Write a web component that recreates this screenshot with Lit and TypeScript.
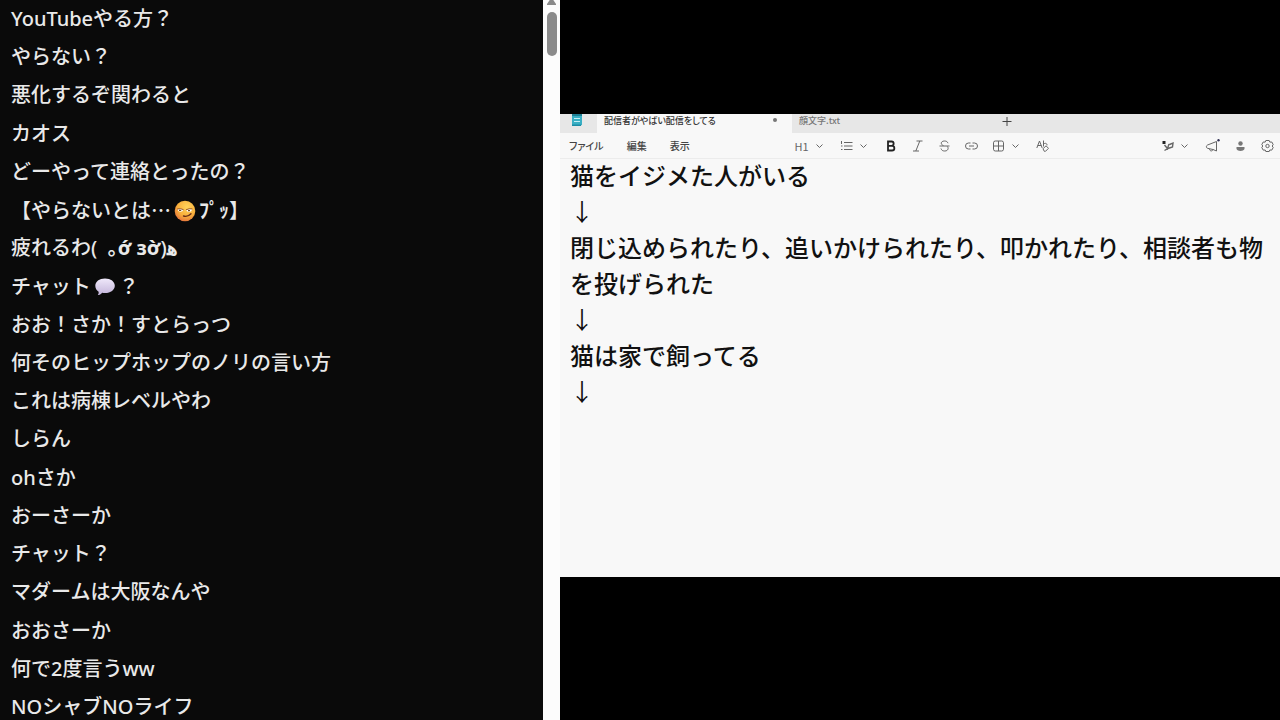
import { LitElement, html, css, svg } from "lit";
import { customElement, property } from "lit/decorators.js";

const icon = (w: number, body: unknown) => html`<svg width=${w} height="14" viewBox="0 0 ${w} 14" fill="none" stroke="currentColor" stroke-width="1" aria-hidden="true">${body}</svg>`;
const chevron = svg`<path d="M0.5 5.5l3 3 3-3"/>`;

const smirk = html`<svg class="emoji" viewBox="0 0 22 22" role="img" aria-label="smirk">
  <defs><radialGradient id="face" cx="0.6" cy="0.3" r="0.75"><stop offset="0" stop-color="#ffd25a"/><stop offset="0.6" stop-color="#f9b03c"/><stop offset="1" stop-color="#e4703c"/></radialGradient></defs>
  <circle cx="11" cy="11" r="10.3" fill="url(#face)"/>
  <path d="M3.5 9.2q3-1.200 6 .6q-1 2.200-3.500 2q-2-.3-2.500-2.600zM12 10q3-1.600 6.200-.8q-.5 2.600-2.800 2.800q-2.400 0-3.400-2z" fill="#fff"/>
  <path d="M3.200 9q3.200-.9 6.400.7M12 9.800q3-1.500 6.400-.9" stroke="#8a4a1c" stroke-width=".9" fill="none"/>
  <path d="M5 10.300h2.200M14 10.600h2" stroke="#7b4a20" stroke-width="1.200"/>
  <path d="M9.500 16q4.300 1.300 7.500-2.200" stroke="#6b2f18" stroke-width="1.400" fill="none" stroke-linecap="round"/>
</svg>`;
const balloon = html`<svg class="emoji" viewBox="0 0 22 22" role="img" aria-label="speech">
  <defs><linearGradient id="bal" x1="0" y1="0" x2="0" y2="1"><stop offset="0" stop-color="#efe8fa"/><stop offset="1" stop-color="#c3b4da"/></linearGradient></defs>
  <path d="M11 2.500c5.800 0 9.800 3.200 9.800 7.200s-4 7.300-9.800 7.300c-1 0-2-.1-2.900-.3-1.100 1.500-2.700 2.300-4.300 2.300 .8-.9 1-2 .8-3.300C2.500 14.400 1.300 12.200 1.300 9.700c0-4 4-7.200 9.700-7.200z" fill="url(#bal)"/>
</svg>`;

const messages: unknown[] = [
  "YouTubeやる方？",
  "やらない？",
  "悪化するぞ関わると",
  "カオス",
  "どーやって連絡とったの？",
  html`【やらないとは<span class="cjk">…</span>${smirk}<b>ﾌﾟｯ</b>】`,
  html`疲れるわ(&nbsp; <b>｡ớ зờ</b>)<b>ﻫ</b>`,
  html`チャット${balloon}？`,
  "おお！さか！すとらっつ",
  "何そのヒップホップのノリの言い方",
  "これは病棟レベルやわ",
  "しらん",
  "ohさか",
  "おーさーか",
  "チャット？",
  "マダームは大阪なんや",
  "おおさーか",
  "何で2度言うww",
  "NOシャブNOライフ",
];

@customElement("chat-log")
class ChatLog extends LitElement {
  static styles = css`
    :host { display: flex; min-width: 0; min-height: 0; background: #0a0a0a; }
    .list { flex: 1; min-width: 0; margin: 0; padding: 5px 11px 0; list-style: none; display: flex; flex-direction: column; justify-content: space-between; overflow: hidden;
      font: 500 20px/27px "Noto Sans", "Noto Sans CJK JP", sans-serif; color: #e9e9e9; }
    .item { height: 27px; white-space: nowrap; text-spacing-trim: space-all; }
    .cjk { font-family: "Noto Sans CJK JP", sans-serif; }
    .emoji { width: 22px; height: 22px; vertical-align: -4px; margin: 0 3px; }
    .scroll { width: 17px; background: #fcfcfc; display: flex; flex-direction: column; align-items: center; gap: 7px; }
    .up { width: 9px; height: 5px; background: #8a8a8a; clip-path: polygon(30% 0, 70% 0, 100% 80%, 100% 100%, 0 100%, 0 80%); }
    .thumb { width: 10px; height: 44px; border-radius: 5px; background: #8b8b8b; }
  `;
  render() {
    return html`<ul class="list" lang="ja">${messages.map((m) => html`<li class="item">${m}</li>`)}</ul>
      <div class="scroll"><div class="up"></div><div class="thumb"></div></div>`;
  }
}

@customElement("note-editor")
class NoteEditor extends LitElement {
  @property({ attribute: false }) lines = [
    "猫をイジメた人がいる",
    "↓",
    "閉じ込められたり、追いかけられたり、叩かれたり、相談者も物を投げられた",
    "↓",
    "猫は家で飼ってる",
    "↓",
  ];
  static styles = css`
    :host { display: flex; flex-direction: column; background: #f8f8f8; overflow: hidden; font-family: "Noto Sans CJK JP", sans-serif; color: #444; }
    button { font: inherit; color: inherit; background: none; border: 0; padding: 0; margin: 0; display: flex; align-items: center; }
    svg { display: block; flex: none; }
    .tabs { display: flex; height: 19px; background: #e7e7e7; font-size: 9px; line-height: 11px; font-weight: 500; font-feature-settings: "palt"; }
    .app { width: 34px; padding-right: 3px; display: flex; justify-content: center; }
    .tab { width: 195px; padding: 0 15px 7px 7px; display: flex; justify-content: space-between; align-items: center; white-space: nowrap; }
    .active { background: #f8f8f8; color: #333; }
    .other { color: #777; }
    .dot { width: 4px; height: 4px; border-radius: 2px; background: #777; }
    .new { padding: 0 15px 5px; }
    .bar { display: flex; align-items: center; height: 25px; padding: 0 6px 0 9px; border-bottom: 1px solid #ececec; font-size: 11px; line-height: 16px; }
    .menus { display: flex; gap: 23px; width: 32%; font-size: 10px; font-weight: 500; font-feature-settings: "palt"; white-space: nowrap; }
    .tools { display: flex; align-items: center; gap: 14px; color: #666; }
    .pair { gap: 7px; margin-right: 3px; }
    .side { display: flex; flex: 1; justify-content: flex-end; align-items: center; gap: 14px; color: #666; }
    .page { margin-top: -2px; padding: 0 10px; color: #111; }
    .line { margin: 0; font-size: 24px; line-height: 36px; font-weight: 500; }
    .arrow { font-weight: 400; }
  `;
  render() {
    return html`
      <div class="tabs">
        <div class="app"><svg width="12" height="13" viewBox="0 0 12 13"><path d="M1 0h10v10.500l-1.500 1.500h-8.500z" fill="#39afc4"/><path d="M1 0h10v2h-10z" fill="#1f7f94"/><path d="M3 4.500h6M3 7.500h6" stroke="#c6eff6" stroke-width="1"/><path d="M1 10.500h9v1.500h-9z" fill="#1c8da6"/></svg></div>
        <button class="tab active">配信者がやばい配信をしてる<span class="dot"></span></button>
        <button class="tab other">顔文字.txt</button>
        <button class="new" aria-label="新しいタブ">${icon(10, svg`<path d="M5 3v9M.5 7.500h9"/>`)}</button>
      </div>
      <div class="bar" lang="ja">
        <div class="menus"><button>ファイル</button><button>編集</button><button>表示</button></div>
        <div class="tools">
          <button class="pair">H1 ${icon(7, chevron)}</button>
          <button class="pair" aria-label="リスト">${icon(13, svg`<path d="M4 3.500h8.500M4 7h8.500M4 10.500h8.500M1.500 2v3M1 7h1.500M1 10.500h1.500"/>`)}${icon(7, chevron)}</button>
          <button aria-label="太字">${icon(13, svg`<path d="M4 2.500h3.500a2.100 2.100 0 0 1 0 4.300h-3.500zM4 6.800h4a2.300 2.300 0 0 1 0 4.700h-4z" stroke="#222" stroke-width="1.800"/>`)}</button>
          <button aria-label="斜体">${icon(13, svg`<path d="M5.500 2h6M2 12h6M8.800 2l-4 10"/>`)}</button>
          <button aria-label="取り消し線">${icon(13, svg`<path d="M10 4.200c-.5-1.500-1.700-2.200-3.500-2.200-4 0-4.200 3.700-1 4.600M1.500 7h10M3 9.500c.5 1.800 1.800 2.500 3.700 2.500 3.500 0 4.200-3 2.600-4.600"/>`)}</button>
          <button aria-label="リンク">${icon(13, svg`<path d="M5.500 4h-2a3 3 0 0 0 0 6h2M7.500 4h2a3 3 0 0 1 0 6h-2M4 7h5"/>`)}</button>
          <button class="pair" aria-label="表">${icon(13, svg`<rect x="1.500" y="2" width="10" height="10" rx="1.800"/><path d="M6.500 2v10M1.500 7h10"/>`)}${icon(7, chevron)}</button>
          <button aria-label="書式のクリア">${icon(13, svg`<path d="M.8 9l2.700-7 2.700 7M1.800 6.500h3.500M7.500 1.500v6M7.500 5.500c.8-1.800 3.800-1.500 3.500.8M7 9.800l3-3 2.500 2.500-3 3h-1.200z"/>`)}</button>
        </div>
        <div class="side">
          <button class="pair" aria-label="書き換え">${icon(13, svg`<path d="M1.500 3.500h3" stroke="#222" stroke-width="3"/><path d="M3.500 6l3 3.500 1.500-4.500M3.500 11.500l3.500-2 4.500-1.500.5-4-3.500 1.500" stroke-width="1.400"/>`)}${icon(7, chevron)}</button>
          <button aria-label="お知らせ">${icon(15, svg`<path d="M11.500 2.500v9.500l-3.500-1.500-5.500-1.200c-1.500-.5-1.500-2.600 0-3.300zM4.500 10c.2 2.300 3 2.600 3.500.5"/><circle cx="13.500" cy="1.200" r="1.200" fill="#335" stroke="none"/>`)}</button>
          <button aria-label="アカウント">${icon(13, svg`<circle cx="6.500" cy="4.500" r="2.200" fill="#777" stroke="none"/><path d="M2.500 8h8v2c-1 2.500-7 2.500-8 0z" fill="#777" stroke="none"/>`)}</button>
          <button aria-label="設定">${icon(13, svg`<path d="M4.800 1.500h3.400l.6 1.600 2-.1 1.400 2.600-1 1.400 1 1.500-1.400 2.600-2-.1-.6 1.500h-3.400l-.6-1.500-2 .1-1.400-2.600 1-1.500-1-1.400 1.400-2.600 2 .1z"/><circle cx="6.500" cy="7" r="1.700"/>`)}</button>
        </div>
      </div>
      <div class="page" lang="ja">${this.lines.map((l) => html`<p class="line ${l === "↓" ? "arrow" : ""}">${l}</p>`)}</div>`;
  }
}

@customElement("app-root")
class AppRoot extends LitElement {
  static styles = css`
    :host { display: grid; grid-template-columns: minmax(0, 7fr) minmax(0, 9fr); height: 100vh; background: #000; overflow: hidden; }
    .stage { display: grid; grid-template-rows: 114fr auto 143fr; }
    .editor { grid-row: 2; aspect-ratio: 720 / 463; }
  `;
  render() {
    return html`<chat-log></chat-log><main class="stage"><note-editor class="editor"></note-editor></main>`;
  }
}
